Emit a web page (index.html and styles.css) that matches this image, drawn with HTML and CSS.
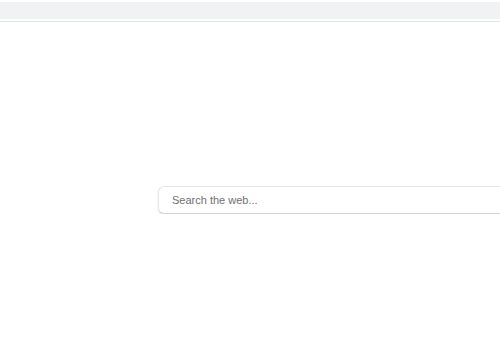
FILE: index.html
```html
<!DOCTYPE html>
<html lang="en">
<head>
    <meta charset="UTF-8">
    <meta name="viewport" content="width=device-width, initial-scale=1.0">
    <title>Search</title>
    <link rel="stylesheet" href="styles.css">
</head>
<body>

<div class="top">
    <div class="top-bar"></div>
</div>

<div class="search-area">
    <input type="text" class="search-input" placeholder="Search the web...">
</div>

</body>
</html>
```

FILE: styles.css
```css
body {
    margin: 0;
    font-family: "Liberation Sans", Arial, sans-serif;
    background-color: #fff;
    overflow: hidden;
}
.top {
    padding-top: 2px;
    padding-bottom: 2px;
    border-bottom: 1px solid #e4e5e7;
}
.top-bar {
    height: 17px;
    background-color: #f1f2f4;
}
.search-area {
    padding-top: 164px;
    padding-left: 158px;
    overflow: hidden;
}
.search-input {
    box-sizing: border-box;
    width: 360px;
    height: 28px;
    padding: 0 13px;
    border: 1px solid #e6e6e6;
    border-bottom-color: #d4d4d4;
    border-radius: 6px;
    box-shadow: 0 1px 2px rgba(0,0,0,0.12);
    font-family: "Liberation Sans", Arial, sans-serif;
    font-size: 11px;
    color: #333;
    outline: none;
}
.search-input::placeholder {
    color: #707070;
}
```
